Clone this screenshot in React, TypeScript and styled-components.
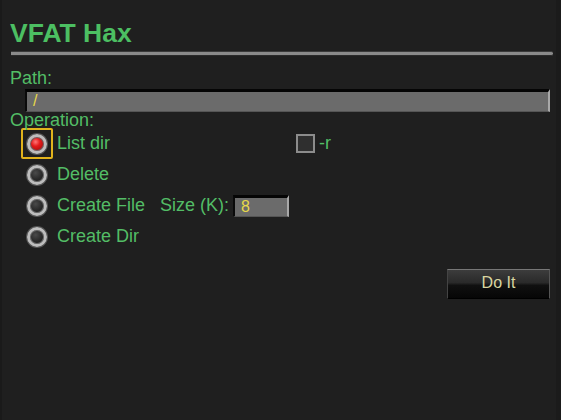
import React, { useState } from 'react';
import styled, { createGlobalStyle } from 'styled-components';

const GlobalStyle = createGlobalStyle`
  html, body {
    margin: 0;
    padding: 0;
    background: #1f1f1f;
  }
  body {
    font-family: "Liberation Sans", Arial, sans-serif;
  }
`;

const Page = styled.div`
  width: 561px;
  height: 420px;
  box-sizing: border-box;
  background: #1f1f1f;
  border-left: 2px solid #1a1a1a;
  border-right: 5px solid #1b1b1b;
  padding: 17px 6px 0 8px;
  color: #53bd66;
  font-size: 18px;
`;

const Title = styled.h1`
  margin: 0;
  font-size: 26.5px;
  font-weight: bold;
  color: #4cbf62;
  line-height: 32px;
`;

const Rule = styled.div`
  margin: 2px 0 0 1px;
  height: 3px;
  width: 542px;
  background: #8a8a8a;
  border-top: 1px solid #3a3a3a;
  border-bottom: 1px solid #2a2a2a;
  border-radius: 0 2px 2px 0;
`;

const FieldLabel = styled.div<{ $top?: number }>`
  margin-top: ${p => p.$top ?? 0}px;
  line-height: 20px;
  position: relative;
`;

const TextInput = styled.div<{ $width: number }>`
  width: ${p => p.$width}px;
  box-sizing: border-box;
  height: 23px;
  background: #6b6b6b;
  border-top: 3px solid #050505;
  border-left: 2px solid #0a0a0a;
  border-right: 2px solid #a8a8a8;
  border-bottom: 1px solid #555;
  color: #e8d94a;
  font-size: 16px;
  line-height: 18px;
  padding-left: 6px;
`;

const PathInput = styled(TextInput)`
  margin: 1px 0 0 15px;
`;

const Options = styled.div`
  display: flex;
  flex-direction: column;
  gap: 10px;
  margin: 3px 0 0 11px;
`;

const OptionRow = styled.div`
  display: flex;
  align-items: center;
  height: 21px;
`;

const RadioFocus = styled.div<{ $focused: boolean }>`
  width: 32px;
  height: 31px;
  box-sizing: border-box;
  display: flex;
  align-items: center;
  justify-content: center;
  margin: -5px 4px -5px 0;
  border: 2px solid ${p => (p.$focused ? '#e2b31c' : 'transparent')};
  border-radius: 2px;
`;

const RadioDot = styled.div<{ $checked: boolean }>`
  width: 20px;
  height: 20px;
  box-sizing: border-box;
  border-radius: 50%;
  border: 3px solid #bdbdbd;
  box-shadow: 0 0 0 1px #555, inset 0 0 0 1px #666;
  background: ${p =>
    p.$checked
      ? 'radial-gradient(circle at 40% 35%, #ff7777 0%, #e41b1b 35%, #8e0606 100%)'
      : 'radial-gradient(circle at 40% 35%, #4a4a4a 0%, #2a2a2a 50%, #111 100%)'};
`;

const OptionLabel = styled.span`
  line-height: 21px;
  white-space: nowrap;
`;

const Extra = styled.div<{ $offset: number }>`
  display: flex;
  align-items: center;
  gap: 4px;
  margin-left: ${p => p.$offset}px;
`;

const CheckBox = styled.div`
  width: 19px;
  height: 19px;
  box-sizing: border-box;
  border: 2px solid #8c8c8c;
  background: #2f2f2f;
`;

const SizeInput = styled(TextInput)`
  height: 22px;
`;

const ButtonRow = styled.div`
  display: flex;
  justify-content: flex-end;
  margin-top: 22px;
`;

const Button = styled.button`
  width: 103px;
  height: 30px;
  box-sizing: border-box;
  background: linear-gradient(#3c3c3c 0%, #2a2a2a 45%, #101010 55%, #060606 100%);
  border: 1px solid #555;
  border-top-color: #777;
  border-left-color: #444;
  border-bottom-color: #000;
  color: #d9d6a0;
  font-family: "Liberation Sans", Arial, sans-serif;
  font-size: 16px;
  padding: 0 0 2px;
`;

const options = ['List dir', 'Delete', 'Create File', 'Create Dir'];

export default function App() {
  const [selected, setSelected] = useState(0);

  return (
    <Page>
      <GlobalStyle />
      <Title>VFAT Hax</Title>
      <Rule />
      <FieldLabel $top={12}>Path:</FieldLabel>
      <PathInput $width={525}>/</PathInput>
      <FieldLabel $top={-2}>Operation:</FieldLabel>
      <Options>
        {options.map((label, i) => (
          <OptionRow key={label} onClick={() => setSelected(i)}>
            <RadioFocus $focused={i === 0}>
              <RadioDot $checked={i === selected} />
            </RadioFocus>
            <OptionLabel>{label}</OptionLabel>
            {i === 0 && (
              <Extra $offset={186}>
                <CheckBox />
                <OptionLabel>-r</OptionLabel>
              </Extra>
            )}
            {i === 2 && (
              <Extra $offset={15}>
                <OptionLabel>Size (K):</OptionLabel>
                <SizeInput $width={56}>8</SizeInput>
              </Extra>
            )}
          </OptionRow>
        ))}
      </Options>
      <ButtonRow>
        <Button>Do It</Button>
      </ButtonRow>
    </Page>
  );
}
